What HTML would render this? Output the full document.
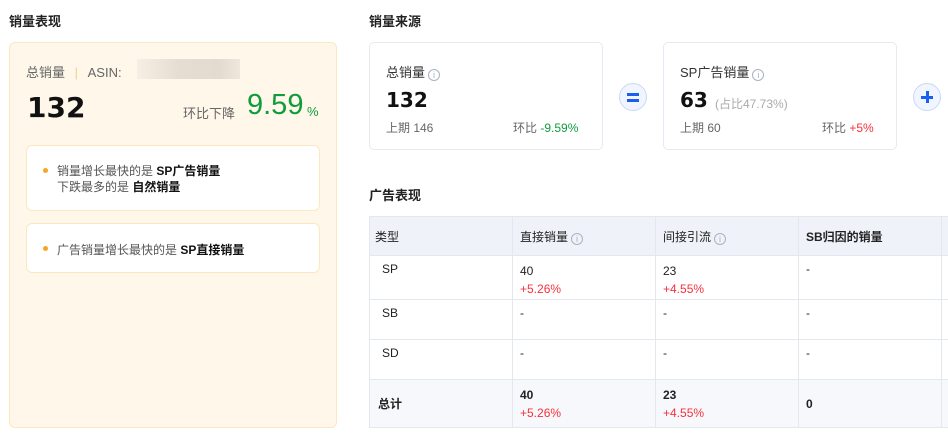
<!DOCTYPE html>
<html><head><meta charset="utf-8"><style>
*{margin:0;padding:0;box-sizing:border-box}
body{width:948px;height:436px;background:#fff;font-family:"Liberation Sans","Noto Sans CJK SC",sans-serif;color:#333;position:relative;overflow:hidden;font-size:12px}
.a{position:absolute;white-space:nowrap}
.h{font-size:13px;font-weight:bold;color:#222}
.card{position:absolute;border:1px solid #e6eaf2;border-radius:5px;background:#fff}
.info{display:inline-block;width:12px;height:12px;border:1px solid #aab2c0;border-radius:50%;font-size:9px;line-height:10px;text-align:center;color:#aab2c0;vertical-align:-1px;margin-left:3px}
.circ{position:absolute;width:28px;height:28px;border-radius:50%;background:#f0f5ff;border:1px solid #c8d8f8}
.red{color:#f5313b}.grn{color:#0f9d3c}
table{table-layout:fixed;width:715px}
td{border-right:1px solid #e3e7ee;border-bottom:1px solid #e3e7ee;vertical-align:top;padding:0 7px;font-size:12px;color:#222;overflow:hidden;white-space:nowrap}
</style></head><body>
<div class="a h" style="left:9px;top:11px">销量表现</div>
<div class="a" style="left:9px;top:42px;width:328px;height:386px;background:#fff7e9;border:1px solid #fde7c1;border-radius:6px"></div>
<div class="a" style="left:26px;top:62px;font-size:13px;color:#666">总销量 <span style="color:#f6cf8a;margin:0 6px">|</span> ASIN:</div>
<div class="a" style="left:137px;top:59px;width:103px;height:20px;background:linear-gradient(90deg,#f6efe4,#e6ddd2 40%,#e4dbd0 80%,#efe7dc)"></div>
<div class="a" style="left:27px;top:91px;font-size:28px;font-weight:bold;color:#111;font-family:'DejaVu Sans',sans-serif">132</div>
<div class="a" style="left:183px;top:103px;font-size:13px;color:#666">环比下降</div>
<div class="a grn" style="left:247px;top:89px;font-size:29px">9.59</div>
<div class="a grn" style="left:307px;top:104px;font-size:13px">%</div>
<div class="a" style="left:26px;top:145px;width:294px;height:66px;background:#fff;border:1px solid #fde7c1;border-radius:6px"></div>
<div class="a" style="left:43px;top:168px;width:5px;height:5px;border-radius:50%;background:#f5a623"></div>
<div class="a" style="left:57px;top:163px;line-height:16px;color:#555">销量增长最快的是 <b style="color:#111">SP广告销量</b><br>下跌最多的是 <b style="color:#111">自然销量</b></div>
<div class="a" style="left:26px;top:223px;width:294px;height:50px;background:#fff;border:1px solid #fde7c1;border-radius:6px"></div>
<div class="a" style="left:43px;top:246px;width:5px;height:5px;border-radius:50%;background:#f5a623"></div>
<div class="a" style="left:57px;top:241px;color:#555">广告销量增长最快的是 <b style="color:#111">SP直接销量</b></div>

<div class="a h" style="left:369px;top:11px">销量来源</div>
<div class="card" style="left:369px;top:42px;width:234px;height:108px"></div>
<div class="a" style="left:386px;top:62px;font-size:13px">总销量<span class="info">i</span></div>
<div class="a" style="left:386px;top:88px;font-size:20px;font-weight:bold;color:#111;font-family:'DejaVu Sans',sans-serif">132</div>
<div class="a" style="left:386px;top:119px;color:#666">上期 146</div>
<div class="a" style="left:513px;top:119px;color:#666">环比 <span class="grn">-9.59%</span></div>
<div class="circ" style="left:619px;top:83px"><div class="a" style="left:7px;top:9px;width:12px;height:3px;background:#1a5ff0"></div><div class="a" style="left:7px;top:15px;width:12px;height:3px;background:#1a5ff0"></div></div>
<div class="card" style="left:663px;top:42px;width:234px;height:108px"></div>
<div class="a" style="left:680px;top:62px;font-size:13px">SP广告销量<span class="info">i</span></div>
<div class="a" style="left:680px;top:88px;font-size:20px;font-weight:bold;color:#111;font-family:'DejaVu Sans',sans-serif">63</div>
<div class="a" style="left:715px;top:95px;color:#aaa">(占比47.73%)</div>
<div class="a" style="left:680px;top:119px;color:#666">上期 60</div>
<div class="a" style="left:822px;top:119px;color:#666">环比 <span class="red">+5%</span></div>
<div class="circ" style="left:913px;top:83px"><div class="a" style="left:7px;top:12px;width:12px;height:3px;background:#1a5ff0"></div><div class="a" style="left:12px;top:7px;width:3px;height:12px;background:#1a5ff0"></div></div>

<div class="a h" style="left:369px;top:185px">广告表现</div>
<table class="a" style="left:369px;top:216px;border-collapse:collapse;border-left:1px solid #e3e7ee;border-top:1px solid #e3e7ee">
<colgroup><col style="width:143px"><col style="width:143px"><col style="width:143px"><col style="width:143px"><col style="width:143px"></colgroup>
<tr style="background:#eff3f9;height:39px"><td style="vertical-align:middle;padding-left:5px">类型</td><td style="vertical-align:middle">直接销量<span class="info">i</span></td><td style="vertical-align:middle">间接引流<span class="info">i</span></td><td style="vertical-align:middle;font-weight:bold">SB归因的销量</td><td></td></tr>
<tr style="height:44px"><td style="padding:6px 12px">SP</td><td style="padding-top:6px;line-height:18px">40<br><span class="red">+5.26%</span></td><td style="padding-top:6px;line-height:18px">23<br><span class="red">+4.55%</span></td><td style="padding-top:6px">-</td><td></td></tr>
<tr style="height:40px"><td style="padding:6px 12px">SB</td><td style="padding-top:6px">-</td><td style="padding-top:6px">-</td><td style="padding-top:6px">-</td><td></td></tr>
<tr style="height:40px"><td style="padding:6px 12px">SD</td><td style="padding-top:6px">-</td><td style="padding-top:6px">-</td><td style="padding-top:6px">-</td><td></td></tr>
<tr style="height:48px;background:#f6f8fc"><td style="vertical-align:middle;font-weight:bold;padding-left:8px">总计</td><td style="padding-top:6px;line-height:18px"><b>40</b><br><span class="red">+5.26%</span></td><td style="padding-top:6px;line-height:18px"><b>23</b><br><span class="red">+4.55%</span></td><td style="vertical-align:middle;font-weight:bold">0</td><td></td></tr>
</table>
</body></html>
